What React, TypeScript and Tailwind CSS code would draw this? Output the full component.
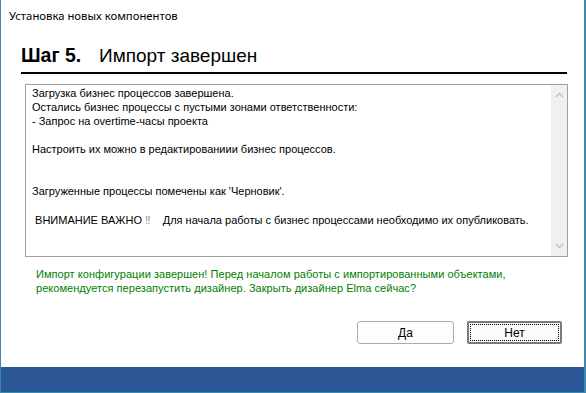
import React from "react";

const lines: string[] = [
  "Загрузка бизнес процессов завершена.",
  "Остались бизнес процессы с пустыми зонами ответственности:",
  "- Запрос на overtime-часы проекта",
  "",
  "Настроить их можно в редактированиии бизнес процессов.",
  "",
  "",
  "Загруженные процессы помечены как 'Черновик'.",
  "",
];

export default function App() {
  return (
    <div
      className="w-[586px] h-[393px] flex flex-col bg-white border-l border-r-2 border-[#3b8aab] overflow-hidden"
      style={{ fontFamily: '"Liberation Sans", Arial, sans-serif' }}
    >
      <div className="flex-1 flex flex-col">
        <div
          className="pl-[8px] pt-[8px] h-[26px] text-[11.3px] leading-[16px] text-black"
          style={{ fontFamily: '"Noto Sans", "Open Sans", sans-serif' }}
        >
          Установка новых компонентов
        </div>
        <div className="ml-[20px] mr-[17px] mt-[18px] h-[30px] border-b-2 border-black flex items-start">
          <div className="text-[19.5px] leading-[23px] font-bold text-black w-[78px]">Шаг 5.</div>
          <div className="text-[19px] leading-[23px] text-black">Импорт завершен</div>
        </div>
        <div className="ml-[24px] mr-[16px] mt-[10px] h-[173px] border border-[#a0a0a0] flex">
          <div className="flex-1 pl-[6px] pt-[1px] text-[11px] leading-[14px] text-black whitespace-pre">
            {lines.map((l, i) => (
              <div key={i} className="h-[14px]">{l}</div>
            ))}
            <div className="h-[14px] mt-[1px]">
              {" ВНИМАНИЕ ВАЖНО "}
              <span className="text-[#8a8a8a]">‼</span>
              {"    Для начала работы с бизнес процессами необходимо их опубликовать."}
            </div>
          </div>
          <div className="w-[16px] bg-[#f0f0f0] flex flex-col justify-between items-center py-[7px]">
            <svg width="9" height="6" viewBox="0 0 9 6">
              <path d="M1 5 L4.5 1.5 L8 5" fill="none" stroke="#c2c2c2" strokeWidth="1.5" />
            </svg>
            <svg width="9" height="6" viewBox="0 0 9 6">
              <path d="M1 1 L4.5 4.5 L8 1" fill="none" stroke="#c2c2c2" strokeWidth="1.5" />
            </svg>
          </div>
        </div>
        <div className="ml-[35px] mt-[10px] text-[11px] leading-[14px] text-[#008000] tracking-[0.04px]">
          <div>Импорт конфигурации завершен! Перед началом работы с импортированными объектами,</div>
          <div>рекомендуется перезапустить дизайнер. Закрыть дизайнер Elma сейчас?</div>
        </div>
        <div className="flex justify-end gap-[13px] mr-[22px] mt-[26px]">
          <button className="w-[97px] h-[23px] border border-[#adadad] rounded-[3px] bg-[#fdfdfd] text-[12px] text-black flex items-center justify-center">
            Да
          </button>
          <button className="w-[95px] h-[23px] border-2 border-[#7a7a7a] rounded-[2px] bg-[#fbfbfb] text-[12px] text-black p-[1px] flex">
            <span className="flex-1 border border-dotted border-black flex items-center justify-center">Нет</span>
          </button>
        </div>
      </div>
      <div className="h-[26px] bg-[#2b5797] border-b border-[#3b8aab]" />
    </div>
  );
}
